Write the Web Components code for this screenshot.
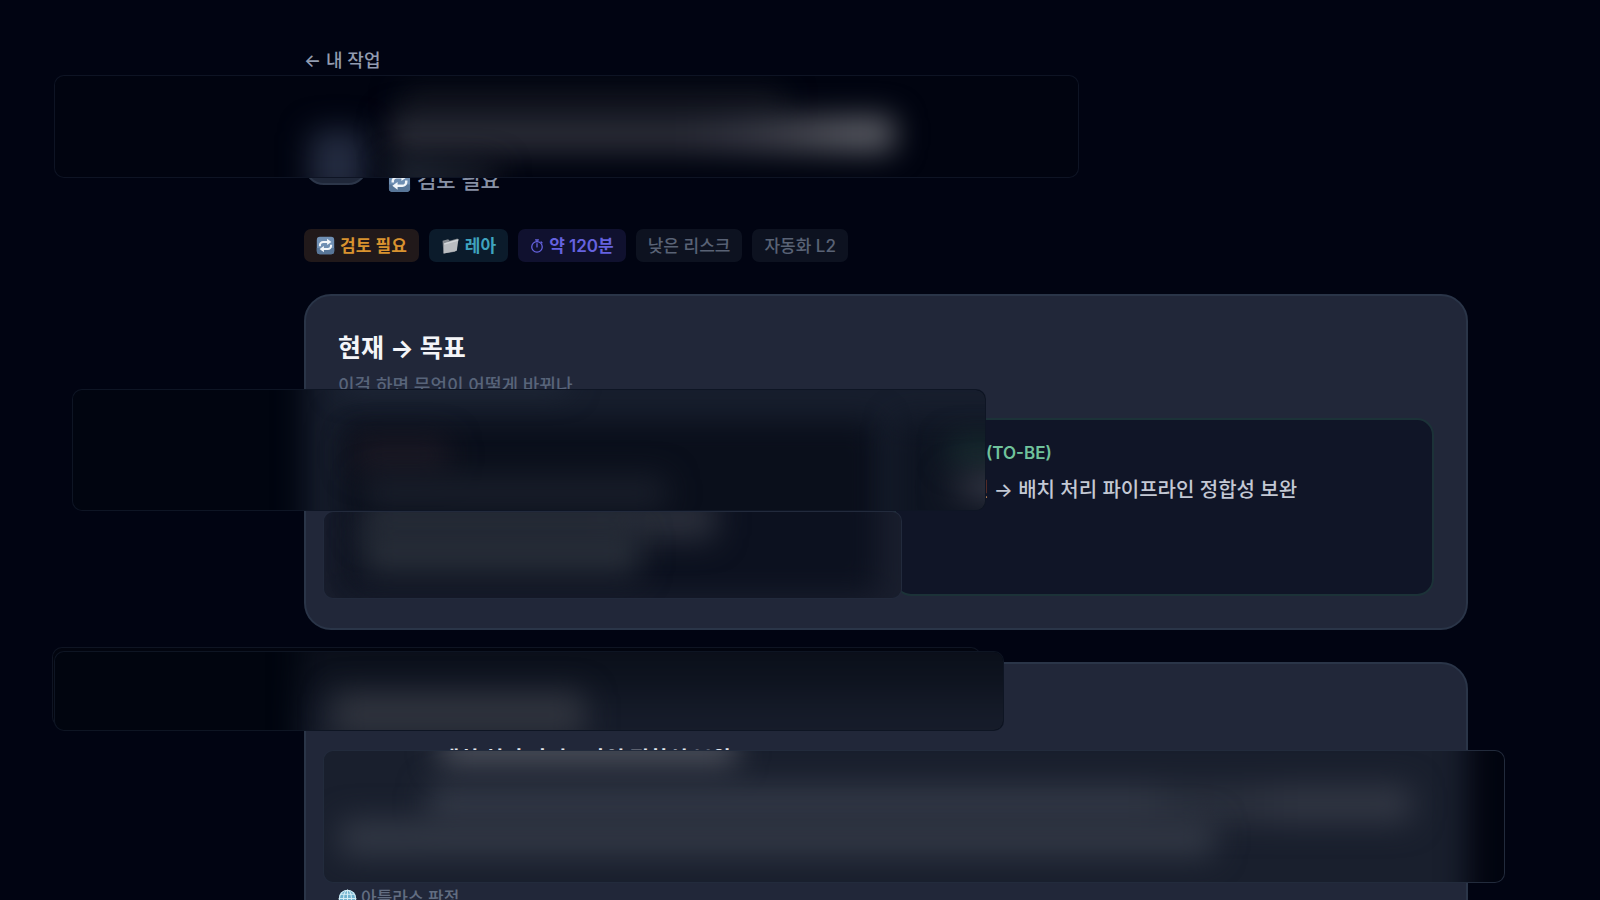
<!DOCTYPE html>
<html lang="ko">
<head>
<meta charset="UTF-8">
<meta name="viewport" content="width=device-width, initial-scale=1.0">
<title>내 작업</title>
<style>
  body {
    margin: 0;
    min-height: 100vh;
    background: #010412;
    color: #c3c8d4;
    font-family: Inter, "Noto Sans CJK KR", sans-serif;
    font-weight: 500;
    overflow: hidden;
  }
</style>
</head>
<body>
<task-page>
  <back-link slot="nav" href="#tasks">← 내 작업</back-link>

  <task-header slot="header">
    <app-icon slot="status" name="repeat" style="--size: 23px"></app-icon>
    <span slot="status">검토 필요</span>
  </task-header>

  <tag-chip slot="tags" tone="amber"><app-icon slot="icon" name="repeat"></app-icon>검토 필요</tag-chip>
  <tag-chip slot="tags" tone="cyan"><app-icon slot="icon" name="folder"></app-icon>레아</tag-chip>
  <tag-chip slot="tags" tone="indigo"><app-icon slot="icon" name="timer" style="--size: 14px"></app-icon>약 120분</tag-chip>
  <tag-chip slot="tags">낮은 리스크</tag-chip>
  <tag-chip slot="tags">자동화 L2</tag-chip>

  <info-card>
    <span slot="heading">현재 → 목표</span>
    <span slot="hint">이걸 하면 무엇이 어떻게 바뀌나</span>
    <compare-grid>
      <state-box></state-box>
      <state-box>
        <span slot="label">(TO-BE)</span>
        <p>인 → 배치 처리 파이프라인 정합성 보완</p>
      </state-box>
    </compare-grid>
  </info-card>

  <info-card>
    <verdict-body>
      <span slot="title">배치 처리 파이프라인 정합성 보완</span>
      <app-icon slot="source" name="globe" style="--size: 19px"></app-icon>
      <span slot="source">아틀라스 판정</span>
    </verdict-body>
  </info-card>

  <glass-panel slot="overlay" style="--x: 54px; --y: 75px; --w: 1023px; --h: 101px; --base: #010410">
    <soft-glow style="--x: 255px; --y: 54px; --w: 56px; --h: 70px; --c: #232b40"></soft-glow>
    <soft-glow style="--x: 346px; --y: 14px; --w: 384px; --h: 22px; --c: #14171f"></soft-glow>
    <soft-glow style="--x: 334px; --y: 40px; --w: 506px; --h: 36px; --c: linear-gradient(90deg, #2d2f39 0 58%, #373944 70%, #454750 80%, #5a5c64 92%)"></soft-glow>
    <soft-glow style="--x: 334px; --y: 88px; --w: 110px; --h: 24px; --c: linear-gradient(90deg, #2c3440 20%, #171a24)"></soft-glow>
  </glass-panel>

  <glass-panel slot="overlay" style="--x: 323px; --y: 511px; --w: 577px; --h: 86px; --base: #191e2d">
    <soft-glow style="--x: 14px; --y: -30px; --w: 540px; --h: 112px; --c: #0c111f"></soft-glow>
    <soft-glow style="--x: 38px; --y: -16px; --w: 354px; --h: 44px; --c: linear-gradient(90deg, #262c37 60%, #2b2f3b)"></soft-glow>
    <soft-glow style="--x: 38px; --y: 14px; --w: 278px; --h: 50px; --c: #262c37"></soft-glow>
  </glass-panel>

  <glass-panel slot="overlay" style="--x: 72px; --y: 389px; --w: 912px; --h: 120px; --base: #010510">
    <soft-glow style="--x: 232px; --y: -50px; --w: 760px; --h: 220px; --c: #171e2d"></soft-glow>
    <soft-glow style="--x: 266px; --y: 30px; --w: 540px; --h: 140px; --c: #0a0f1b"></soft-glow>
    <soft-glow style="--x: 822px; --y: 30px; --w: 200px; --h: 140px; --c: #0e1421"></soft-glow>
    <soft-glow style="--x: 266px; --y: -20px; --w: 230px; --h: 20px; --c: #222b3b"></soft-glow>
    <soft-glow style="--x: 280px; --y: 48px; --w: 96px; --h: 34px; --c: #1c1924"></soft-glow>
    <soft-glow style="--x: 290px; --y: 86px; --w: 304px; --h: 34px; --c: #191e2a"></soft-glow>
    <soft-glow style="--x: 876px; --y: 50px; --w: 60px; --h: 24px; --c: #193132"></soft-glow>
    <soft-glow style="--x: 876px; --y: 84px; --w: 80px; --h: 26px; --c: linear-gradient(90deg, #1c202c, #3d3f4d 50%)"></soft-glow>
  </glass-panel>

  <glass-panel slot="overlay" style="--x: 52px; --y: 647px; --w: 927px; --h: 78px; --base: #02050f"></glass-panel>
  <glass-panel slot="overlay" style="--x: 54px; --y: 651px; --w: 948px; --h: 78px; --base: #01050f">
    <soft-glow style="--x: 246px; --y: -20px; --w: 800px; --h: 170px; --c: linear-gradient(#0b101b 20%, #161c2a 50%)"></soft-glow>
    <soft-glow style="--x: 278px; --y: 40px; --w: 252px; --h: 46px; --c: #2f333d"></soft-glow>
  </glass-panel>

  <glass-panel slot="overlay" style="--x: 323px; --y: 750px; --w: 1180px; --h: 131px; --base: #191f2d">
    <soft-glow style="--x: 1144px; --y: -50px; --w: 120px; --h: 230px; --c: #01040f"></soft-glow>
    <soft-glow style="--x: 116px; --y: -20px; --w: 296px; --h: 36px; --c: #4a4e59"></soft-glow>
    <soft-glow style="--x: 104px; --y: 34px; --w: 984px; --h: 38px; --c: linear-gradient(90deg, #323846 72%, #292f3c 77%, #2b303d 83%, #313643 88%)"></soft-glow>
    <soft-glow style="--x: 15px; --y: 68px; --w: 876px; --h: 38px; --c: #313744"></soft-glow>
  </glass-panel>
</task-page>

<script>
function define(name, html, setup) {
  customElements.define(name, class extends HTMLElement {
    connectedCallback() {
      if (this.shadowRoot) return;
      this.attachShadow({ mode: 'open' });
      this.shadowRoot.innerHTML = html;
      if (setup) setup(this);
    }
  });
}

const icons = {
  repeat: `
    <rect x="1" y="1" width="22" height="22" rx="4" fill="#6f8fb3"/>
    <path d="M1 15h22v4a4 4 0 0 1-4 4H5a4 4 0 0 1-4-4z" fill="#587698"/>
    <path d="M5 13v-1.500A4 4 0 0 1 9 7.500h7M19 11v1.500a4 4 0 0 1-4 4H8" fill="none" stroke="#f2f6fa" stroke-width="2.600"/>
    <path d="M14 3.500l5.500 4-5.500 4zM10 12.500l-5.500 4 5.500 4z" fill="#f2f6fa"/>`,
  folder: `
    <path d="M2 6l7-2 2 2 10-3v3L18 20 3 22z" fill="#868b91"/>
    <path d="M4 9l18-5-2 14.500L3.500 22z" fill="#b9bcc0"/>
    <path d="M4 9l18-5-.3 2L4 11z" fill="#d2d5d8"/>`,
  timer: `
    <g fill="none" stroke="#6663e0" stroke-width="2.200" stroke-linecap="round">
      <circle cx="12" cy="13.500" r="9"/>
      <path d="M12 8v5.500M9.500 1.500h5M12 1.500v3M19 5l1.500 1.500"/>
    </g>`,
  globe: `
    <circle cx="12" cy="12" r="11" fill="#6fb2cf"/>
    <g fill="none" stroke="#d5edf5" stroke-width="1.300">
      <circle cx="12" cy="12" r="10.300"/>
      <ellipse cx="12" cy="12" rx="5" ry="10.500"/>
      <path d="M12 1v22M1 12h22M3 6.500h18M3 17.500h18"/>
    </g>`
};

define('app-icon', `
  <style>
    :host { display: inline-flex; flex: none; width: var(--size, 19px); height: var(--size, 19px); }
    svg { width: 100%; height: 100%; }
  </style>
  <svg viewBox="0 0 24 24" aria-hidden="true"></svg>
`, el => {
  el.shadowRoot.querySelector('svg').innerHTML = icons[el.getAttribute('name')];
});

define('task-page', `
  <style>
    :host { display: block; position: relative; height: 100vh; overflow: hidden; }
    main { padding: 48px 132px 0 304px; }
    .tags { display: flex; flex-wrap: wrap; gap: 10px; margin: 36px 0 32px; }
    .cards { display: flex; flex-direction: column; gap: 32px; }
  </style>
  <main>
    <slot name="nav"></slot>
    <slot name="header"></slot>
    <div class="tags"><slot name="tags"></slot></div>
    <div class="cards"><slot></slot></div>
  </main>
  <slot name="overlay"></slot>
`);

define('back-link', `
  <style>
    :host { display: block; height: 24px; }
    a { display: block; color: #929cb0; font-size: 18px; line-height: 26px; text-decoration: none; }
  </style>
  <a><slot></slot></a>
`, el => {
  el.shadowRoot.querySelector('a').href = el.getAttribute('href');
});

define('task-header', `
  <style>
    :host { display: flex; align-items: flex-end; gap: 20px; height: 121px; }
    .avatar {
      box-sizing: border-box;
      width: 64px;
      height: 64px;
      margin-bottom: 8px;
      border: 2px solid #2c3649;
      border-radius: 20px;
      background: #1f2739;
    }
    .status { display: flex; align-items: center; gap: 6px; color: #8791a5; font-size: 21px; line-height: 24px; }
  </style>
  <div class="avatar"></div>
  <div class="status"><slot name="status"></slot></div>
`);

define('tag-chip', `
  <style>
    :host {
      display: inline-flex;
      align-items: center;
      gap: 5px;
      box-sizing: border-box;
      height: 33px;
      padding: 0 12px;
      border-radius: 7px;
      background: #0d1220;
      color: #596275;
      font-size: 17px;
      line-height: 24px;
    }
    :host([tone]) { font-weight: 600; }
    :host([tone="amber"]) { background: #21191a; color: #d9932f; }
    :host([tone="cyan"]) { background: #0b1b2b; color: #3fa3bf; }
    :host([tone="indigo"]) { background: #10112f; color: #6562df; }
  </style>
  <slot name="icon"></slot><span><slot></slot></span>
`);

define('info-card', `
  <style>
    :host {
      display: block;
      box-sizing: border-box;
      min-height: 336px;
      padding: 32px;
      border: 2px solid #2a3548;
      border-radius: 27px;
      background: #212739;
    }
    h2 { margin: 0; height: 40px; color: #f4f5f8; font-size: 25px; line-height: 40px; font-weight: 700; }
    .hint { margin: 5px 0 19px; height: 26px; color: #58647a; font-size: 18px; line-height: 26px; }
  </style>
  <h2><slot name="heading"></slot></h2>
  <div class="hint"><slot name="hint"></slot></div>
  <slot></slot>
`);

define('compare-grid', `
  <style>
    :host { display: grid; grid-template-columns: 1fr 1fr; gap: 16px; }
  </style>
  <slot></slot>
`);

define('state-box', `
  <style>
    :host {
      display: flex;
      flex-direction: column;
      gap: 11px;
      box-sizing: border-box;
      min-height: 178px;
      padding: 21px 22px 20px 74px;
      border: 2px solid #1c3238;
      border-radius: 17px;
      background: #101527;
    }
    .label { height: 24px; padding-left: 16px; color: #70c39c; font-size: 17px; line-height: 24px; font-weight: 600; }
    ::slotted(p) { margin: 0; color: #c3c8d4; font-size: 20px; line-height: 28px; white-space: nowrap; }
  </style>
  <div class="label"><slot name="label"></slot></div>
  <slot></slot>
`);

define('verdict-body', `
  <style>
    :host { display: flex; flex-direction: column; justify-content: space-between; height: 168px; margin-top: -44px; }
    .title { padding-left: 102px; color: #e3e6ec; font-size: 21px; line-height: 34px; font-weight: 600; }
    .source { display: flex; align-items: center; gap: 4px; color: #626d81; font-size: 17px; line-height: 24px; }
  </style>
  <div class="title"><slot name="title"></slot></div>
  <div class="source"><slot name="source"></slot></div>
`);

define('glass-panel', `
  <style>
    :host {
      display: block;
      position: absolute;
      left: var(--x);
      top: var(--y);
      width: var(--w);
      height: var(--h);
      border: 1px solid rgba(90, 105, 140, .16);
      border-radius: 10px;
      background: var(--base);
      overflow: hidden;
    }
  </style>
  <slot></slot>
`);

define('soft-glow', `
  <style>
    :host {
      display: block;
      position: absolute;
      left: var(--x);
      top: var(--y);
      width: var(--w);
      height: var(--h);
      border-radius: 8px;
      background: var(--c);
      filter: blur(15px);
    }
  </style>
`);
</script>
</body>
</html>
